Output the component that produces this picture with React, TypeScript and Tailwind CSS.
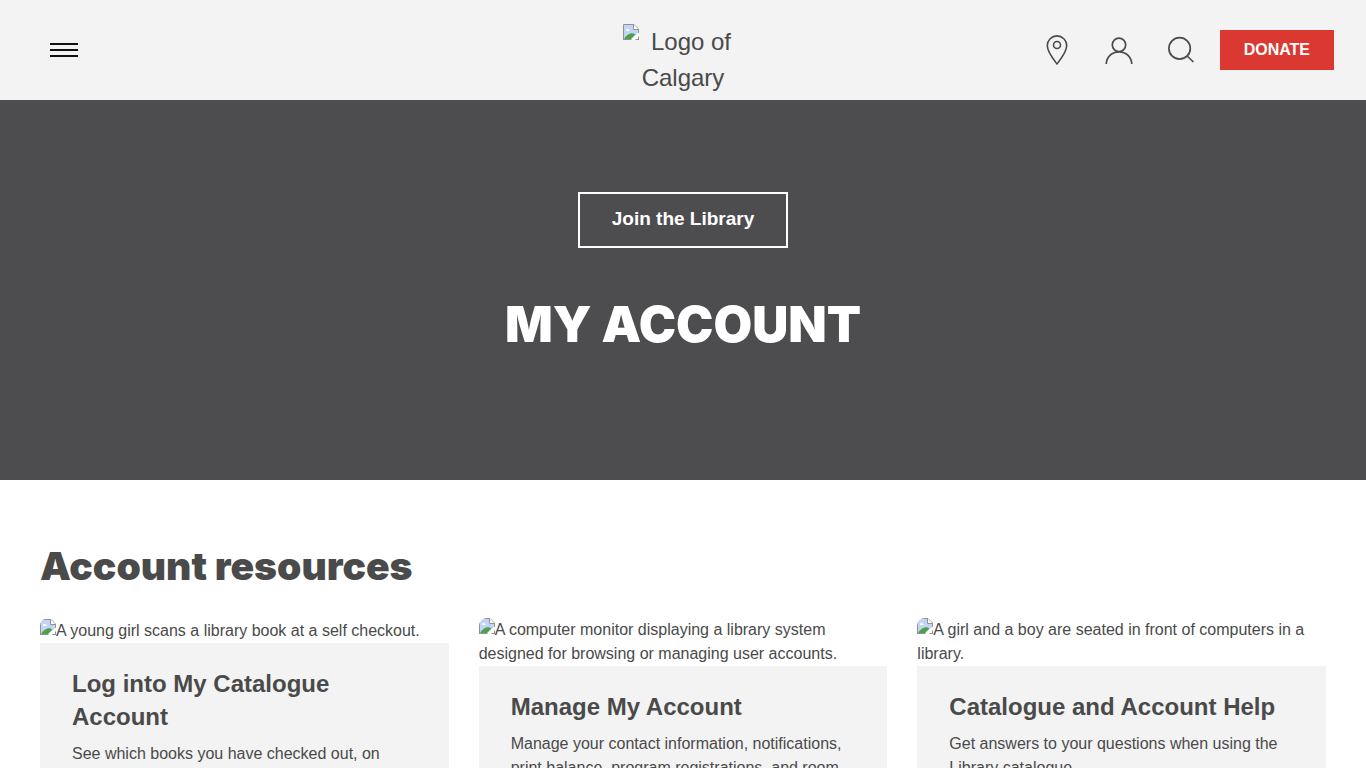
type ImageGlyphProps = { className?: string };

function ImageGlyph({ className = "" }: ImageGlyphProps) {
  return (
    <svg viewBox="0 0 16 16" aria-hidden="true" className={`size-4 ${className}`}>
      <path d="M0.5 0.5H11L15.5 5V15.5H0.5Z" fill="#fff" />
      <path d="M1 1H10.5V5.5H15V9L8 15H1Z" fill="#c3d5f6" />
      <path d="M3 6.2C3 5 4.6 4.6 5.1 5.4C6.2 5 7 6 6.6 7H3.2Z" fill="#fff" />
      <path d="M1.5 15V14C3.5 11.5 6 9.2 8.5 9.2C10 9.2 11.5 9.6 12.4 10.6L8 15Z" fill="#4fa04a" />
      <path d="M0.5 16V0.5H11L15.5 5V16M0 15.5H16" fill="none" stroke="#919191" />
      <path d="M10.5 0.5V5.5H15.5" fill="#fff" stroke="#919191" />
      <path d="M8 16L16 8.5V12L12 16Z" fill="#fff" />
    </svg>
  );
}

const cards = [
  {
    alt: "A young girl scans a library book at a self checkout.",
    title: "Log into My Catalogue Account",
    text: "See which books you have checked out, on hold, or overdue.",
  },
  {
    alt: "A computer monitor displaying a library system designed for browsing or managing user accounts.",
    title: "Manage My Account",
    text: "Manage your contact information, notifications, print balance, program registrations, and room bookings.",
  },
  {
    alt: "A girl and a boy are seated in front of computers in a library.",
    title: "Catalogue and Account Help",
    text: "Get answers to your questions when using the Library catalogue.",
  },
];

function Header() {
  return (
    <header className="grid h-25 grid-cols-[1fr_120px_1fr] bg-[#f3f3f3] px-8">
      <button type="button" aria-label="Open menu" className="flex w-16 flex-col items-center justify-center gap-1">
        <span className="h-0.5 w-7 bg-[#121212]" />
        <span className="h-0.5 w-7 bg-[#121212]" />
        <span className="h-0.5 w-7 bg-[#121212]" />
      </button>
      <a href="#home" className="h-25 overflow-hidden pt-6 text-center text-2xl leading-9">
        <ImageGlyph className="float-left" />
        Logo of Calgary
      </a>
      <nav aria-label="Tools" className="flex items-center justify-end">
        <div className="mr-[23px] flex gap-[30px]">
          <a href="#locations" aria-label="Locations">
            <svg viewBox="0 0 32 32" className="size-8" fill="none" stroke="currentColor" strokeWidth="1.6" strokeLinejoin="round">
              <path d="M16 30C12.5 25.5 6.3 18 6.3 11.6A9.7 9.7 0 0 1 25.7 11.6C25.7 18 19.5 25.5 16 30Z" />
              <circle cx="16" cy="11" r="3.5" />
            </svg>
          </a>
          <a href="#account" aria-label="My account">
            <svg viewBox="0 0 32 32" className="size-8" fill="none" stroke="currentColor" strokeWidth="1.7">
              <circle cx="16" cy="10.8" r="6.7" />
              <path d="M3.2 30C3.7 22.5 9 17.8 16 17.8S28.3 22.5 28.8 30" />
            </svg>
          </a>
          <a href="#search" aria-label="Search">
            <svg viewBox="0 0 32 32" className="size-8" fill="none" stroke="currentColor" strokeWidth="1.7">
              <circle cx="14.6" cy="14.4" r="10.7" />
              <path d="M22.2 22L28.4 28" />
            </svg>
          </a>
        </div>
        <a href="#donate" className="flex h-10 items-center bg-[#da3831] px-6 font-bold text-white">
          DONATE
        </a>
      </nav>
    </header>
  );
}

export default function App() {
  return (
    <div className="min-h-screen bg-white font-['Liberation_Sans',Arial,sans-serif] text-base text-[#4a4a4a]">
      <Header />
      <main>
        <section className="flex min-h-[380px] flex-col items-center bg-[#4d4d4f] pt-23 text-white">
          <a href="#join" className="border-2 border-white px-8 pt-[13px] pb-[15px] text-[19px] leading-6 font-bold">
            Join the Library
          </a>
          <h1 className="mt-12 font-['Arial_Black',Inter,sans-serif] text-[50px] leading-14 font-black">MY ACCOUNT</h1>
        </section>
        <section className="px-10 pt-16">
          <h2 className="font-['Arial_Black',Inter,sans-serif] text-[39px] leading-11 font-black">Account resources</h2>
          <div className="mt-[30px] grid grid-cols-3 items-start gap-[30px]">
            {cards.map((card) => (
              <article key={card.title}>
                <div className="flex min-h-[25px] flex-col justify-end overflow-hidden rounded-t-lg">
                  <p>
                    <ImageGlyph className="float-left" />
                    {card.alt}
                  </p>
                </div>
                <div className="bg-[#f3f3f3] px-8 py-6">
                  <h3 className="text-2xl leading-[33px] font-bold">{card.title}</h3>
                  <p className="mt-[9px]">{card.text}</p>
                </div>
              </article>
            ))}
          </div>
        </section>
      </main>
    </div>
  );
}
